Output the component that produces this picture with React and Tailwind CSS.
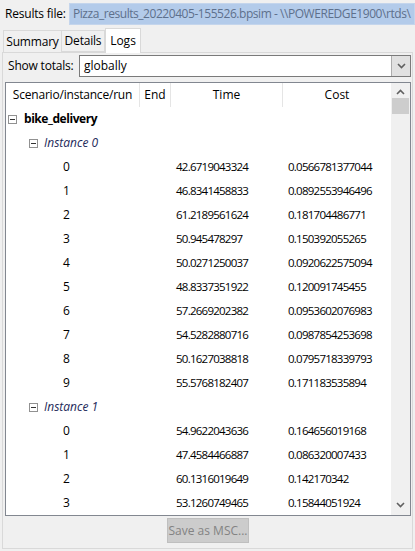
import React from "react";

const instances = [
  {
    name: "Instance 0",
    runs: [
      ["0", "42.6719043324", "0.0566781377044"],
      ["1", "46.8341458833", "0.0892553946496"],
      ["2", "61.2189561624", "0.181704486771"],
      ["3", "50.945478297", "0.150392055265"],
      ["4", "50.0271250037", "0.0920622575094"],
      ["5", "48.8337351922", "0.120091745455"],
      ["6", "57.2669202382", "0.0953602076983"],
      ["7", "54.5282880716", "0.0987854253698"],
      ["8", "50.1627038818", "0.0795718339793"],
      ["9", "55.5768182407", "0.171183535894"],
    ],
  },
  {
    name: "Instance 1",
    runs: [
      ["0", "54.9622043636", "0.164656019168"],
      ["1", "47.4584466887", "0.086320007433"],
      ["2", "60.1316019649", "0.142170342"],
      ["3", "53.1260749465", "0.15844051924"],
    ],
  },
];

function MinusBox() {
  return (
    <span className="flex h-[9px] w-[9px] items-center justify-center border border-[#919191] bg-white">
      <span className="h-px w-[5px] bg-[#333]" />
    </span>
  );
}

function Chevron({ up }) {
  return (
    <svg width="9" height="6" viewBox="0 0 9 6">
      <path
        d={up ? "M1 5 L4.5 1.5 L8 5" : "M1 1 L4.5 4.5 L8 1"}
        fill="none"
        stroke="#606060"
        strokeWidth="1.6"
      />
    </svg>
  );
}

export default function App() {
  return (
    <div
      className="h-[551px] w-[415px] overflow-hidden bg-[#f0f0f0] text-[12px] text-black"
      style={{ fontFamily: '"Open Sans", "Noto Sans", sans-serif' }}
    >
      <div className="flex h-[27px] items-center pt-[1px]">
        <span className="w-[69px] shrink-0 pl-[5px] tracking-[-0.2px]">Results file:</span>
        <div className="flex h-[22px] flex-1 items-center overflow-hidden whitespace-nowrap border border-[#c4d5ec] bg-[#b3cbea] pl-[3px] tracking-[-0.45px] text-[#5e708c]">
          Pizza_results_20220405-155526.bpsim - \\POWEREDGE1900\rtds\
        </div>
      </div>

      <div className="flex h-[25px] items-end pl-[3px]">
        <div className="flex h-[22px] w-[59px] items-center justify-center border border-b-0 border-[#d9d9d9] bg-[#f0f0f0] tracking-[-0.2px]">
          Summary
        </div>
        <div className="flex h-[22px] w-[43px] items-center justify-center border-y border-r border-[#d9d9d9] bg-[#f0f0f0] tracking-[-0.2px]">
          Details
        </div>
        <div className="relative z-10 -mb-px flex h-[25px] w-[36px] items-center justify-center border border-b-0 border-[#d9d9d9] bg-white">
          Logs
        </div>
      </div>

      <div className="mx-[2px] h-[497px] border border-[#d9d9d9] bg-[#f0f0f0] pl-[2px] pr-[1px]">
        <div className="mt-[2px] flex h-[22px] items-center">
          <span className="w-[74px] shrink-0 pl-[3px] tracking-[-0.2px]">Show totals:</span>
          <div className="flex h-[22px] flex-1 items-center border border-[#7a7a7a] bg-white">
            <span className="flex-1 pl-[4px]">globally</span>
            <span className="flex h-[20px] w-[19px] items-center justify-center border-l border-[#adadad] bg-[#e1e1e1]">
              <Chevron />
            </span>
          </div>
        </div>

        <div className="mt-[5px] flex h-[434px] border border-[#828790] bg-white">
          <div className="flex-1 overflow-hidden">
            <div className="flex h-[24px] items-center">
              <div className="flex h-full w-[134px] items-center justify-center border-r border-[#e5e5e5] tracking-[-0.2px]">
                Scenario/instance/run
              </div>
              <div className="flex h-full w-[31px] items-center justify-center border-r border-[#e5e5e5]">
                End
              </div>
              <div className="flex h-full w-[112px] items-center justify-center border-r border-[#e5e5e5]">
                Time
              </div>
              <div className="flex h-full flex-1 items-center justify-center">Cost</div>
            </div>

            <div className="flex h-[24px] items-center gap-[7px] pl-[2px]">
              <MinusBox />
              <span className="font-bold tracking-[-0.45px]">bike_delivery</span>
            </div>
            {instances.map((inst) => (
              <div key={inst.name}>
                <div className="flex h-[24px] items-center gap-[6px] pl-[23px]">
                  <MinusBox />
                  <span className="italic text-[#1e2a5a]">{inst.name}</span>
                </div>
                {inst.runs.map(([run, time, cost]) => (
                  <div className="flex h-[24px] items-center" key={inst.name + run}>
                    <span className="w-[166px] shrink-0 pl-[57px]">{run}</span>
                    <span className="w-[112px] shrink-0 pl-[4px] text-[11.5px] tracking-[-0.75px]">
                      {time}
                    </span>
                    <span className="pl-[4px] text-[11.5px] tracking-[-0.75px]">{cost}</span>
                  </div>
                ))}
              </div>
            ))}
          </div>

          <div className="flex w-[19px] shrink-0 flex-col items-center bg-[#f0f0f0]">
            <div className="flex h-[14px] w-full items-center justify-center pt-[4px]">
              <Chevron up />
            </div>
            <div className="mt-[1px] h-[16px] w-[17px] bg-[#cdcdcd]" />
            <div className="flex-1" />
            <div className="flex h-[17px] w-full items-center justify-center pb-[4px]">
              <Chevron />
            </div>
          </div>
        </div>

        <div className="mt-[2px] flex justify-center">
          <div className="flex h-[25px] w-[82px] items-center justify-center border border-[#bfbfbf] bg-[#cccccc] text-[#838383]">
            Save as MSC...
          </div>
        </div>
      </div>
    </div>
  );
}
